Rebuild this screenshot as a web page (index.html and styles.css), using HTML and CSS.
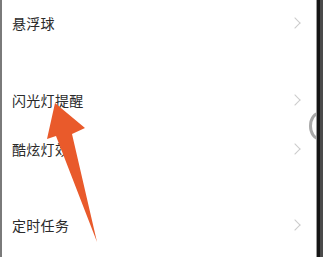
FILE: index.html
```html
<!DOCTYPE html>
<html lang="zh-CN">
<head>
  <meta charset="UTF-8" />
  <title>设置</title>
  <meta name="viewport" content="width=device-width, initial-scale=1.0" />
  <link rel="stylesheet" href="styles.css">
</head>
<body>
  <div class="phone">
    <div class="screen">
      <div class="row row-first">
        <span class="label">悬浮球</span>
        <span class="chevron"></span>
      </div>
      <div class="row row-flash">
        <span class="label">闪光灯提醒</span>
        <span class="chevron"></span>
      </div>
      <div class="row row-cool">
        <span class="label">酷炫灯效</span>
        <span class="chevron"></span>
      </div>
      <div class="row row-timer">
        <span class="label">定时任务</span>
        <span class="chevron"></span>
      </div>
    </div>
    <div class="frame"></div>
    <div class="side-button"></div>
  </div>

  <!-- annotation arrow drawn over the screenshot -->
  <svg class="arrow" viewBox="0 0 323 257" width="323" height="257">
    <polygon points="55,103 85,128 72,134 97,242 56,136 47,139" fill="#e95a2b" />
  </svg>
</body>
</html>
```

FILE: styles.css
```css
body {
  margin: 0;
  font-family: "Noto Sans CJK SC", "Noto Sans", sans-serif;
  background: #fff;
  overflow: hidden;
}

.phone {
  display: flex;
  width: 323px;
  height: 257px;
  position: relative;
}

.screen {
  flex: 1;
  background: #fff;
  border-left: 2px solid #7a7a7a;
}

.row {
  height: 46px;
  display: flex;
  align-items: center;
  justify-content: space-between;
  padding-left: 10px;
  padding-right: 15px;
}

.row-flash {
  margin-top: 31px;
}

.row-cool {
  margin-top: 3px;
}

.row-timer {
  margin-top: 30px;
}

.label {
  font-size: 14px;
  color: #2a2a2a;
  letter-spacing: 0.3px;
}

.chevron {
  width: 7px;
  height: 7px;
  border-top: 1px solid #cbcbcb;
  border-right: 1px solid #cbcbcb;
  transform: rotate(45deg);
  margin-right: 2px;
}

.frame {
  width: 7px;
  background: linear-gradient(to right, #9a9a9a 0, #9a9a9a 1px, #151515 1px, #151515 4px, #4a4a4a 4px);
}

.side-button {
  position: absolute;
  left: 309px;
  top: 112px;
  width: 20px;
  height: 28px;
  border-radius: 50%;
  border: 3px solid #a8a8a8;
  box-sizing: border-box;
  clip-path: inset(0 13px 0 0);
}

.arrow {
  position: absolute;
  left: 0;
  top: 0;
}
```
